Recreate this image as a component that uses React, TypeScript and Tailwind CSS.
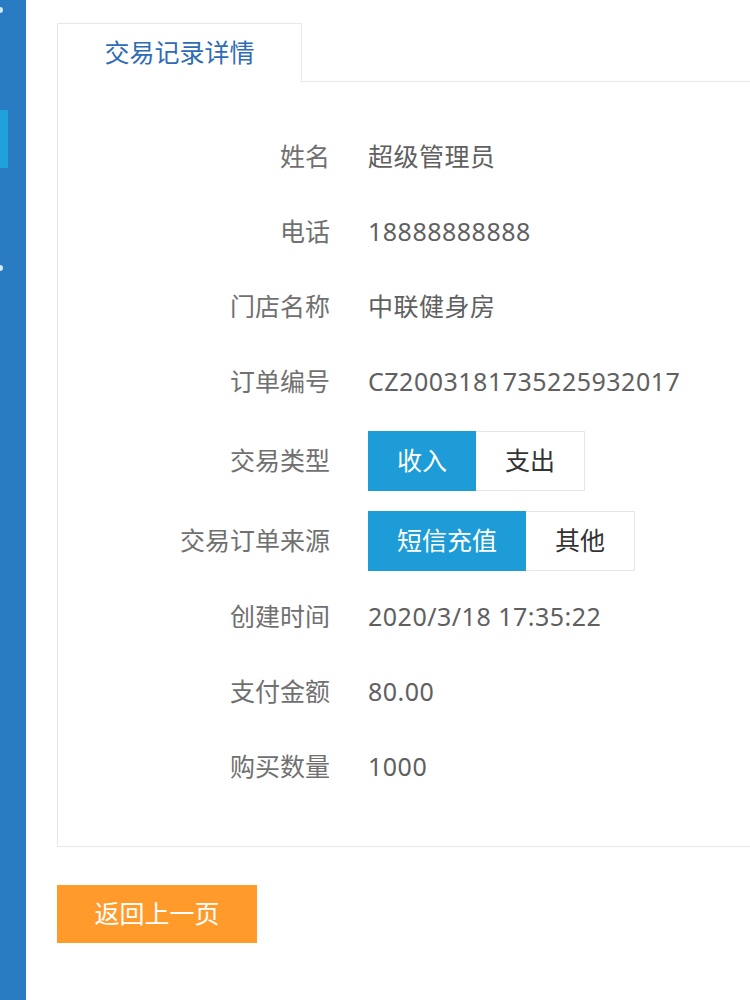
import React from "react";

type Row =
  | { label: string; value: string }
  | { label: string; options: string[]; active: number; h: string };

const rows: Row[] = [
  { label: "姓名", value: "超级管理员" },
  { label: "电话", value: "18888888888" },
  { label: "门店名称", value: "中联健身房" },
  { label: "订单编号", value: "CZ2003181735225932017" },
  { label: "交易类型", options: ["收入", "支出"], active: 0, h: "h-[84px]" },
  { label: "交易订单来源", options: ["短信充值", "其他"], active: 0, h: "h-[76px]" },
  { label: "创建时间", value: "2020/3/18 17:35:22" },
  { label: "支付金额", value: "80.00" },
  { label: "购买数量", value: "1000" },
];

const font = { fontFamily: '"Noto Sans", "Noto Sans CJK SC", sans-serif' };

function Sidebar() {
  return (
    <aside className="relative h-full w-[26px] shrink-0 bg-[#2a7cc2]">
      {/* cropped menu bits */}
      <span className="absolute left-[-3px] top-[7px] h-[6px] w-[6px] rounded-full bg-[#cfe9fb]" />
      <span className="absolute left-0 top-[110px] h-[58px] w-[8px] bg-[#20a0dc]" />
      <span className="absolute left-[-3px] top-[265px] h-[6px] w-[6px] rounded-full bg-[#d6ecfb]" />
    </aside>
  );
}

function Segmented({ options, active }: { options: string[]; active: number }) {
  return (
    <div className="flex tracking-normal">
      {options.map((o, i) => (
        <button
          key={o}
          type="button"
          className={`h-[60px] px-[29px] text-[25px] ${
            i === active
              ? "bg-[#1d9cd7] text-white"
              : "border border-l-0 border-[#e6e6e6] bg-white text-[#333]"
          }`}
        >
          {o}
        </button>
      ))}
    </div>
  );
}

export default function App() {
  return (
    <div className="flex h-[1000px] w-[750px] overflow-hidden bg-white" style={font}>
      <Sidebar />
      <main className="min-w-0 flex-1 pl-[31px] pt-[23px]">
        <div className="flex w-[760px]">
          <div className="flex h-[59px] w-[245px] items-center justify-center border border-b-0 border-[#e8e8e8] bg-white text-[25px] text-[#2e6cb5]">
            交易记录详情
          </div>
          <div className="flex-1 border-b border-[#e8e8e8]" />
        </div>

        <section className="h-[765px] w-[760px] border border-t-0 border-[#e8e8e8] pt-[37px]">
          {rows.map((r) => (
            <div
              key={r.label}
              className={`flex items-center ${"options" in r ? r.h : "h-[75px]"}`}
            >
              <div className="w-[272px] shrink-0 text-right text-[25px] text-[#707070]">
                {r.label}
              </div>
              <div className="ml-[38px] text-[25px] tracking-[0.5px] text-[#606060]">
                {"options" in r ? (
                  <Segmented options={r.options} active={r.active} />
                ) : (
                  r.value
                )}
              </div>
            </div>
          ))}
        </section>

        <button
          type="button"
          className="mt-[38px] h-[58px] w-[200px] bg-[#ff9a2b] text-[25px] text-white"
        >
          返回上一页
        </button>
      </main>
    </div>
  );
}
